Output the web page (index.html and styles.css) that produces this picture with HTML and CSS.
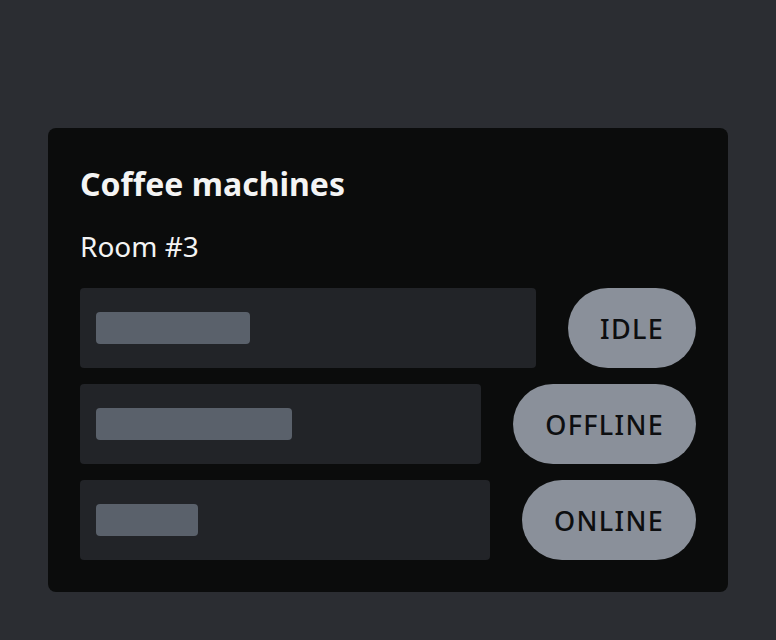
FILE: index.html
```html
<!DOCTYPE html>
<html>
<head>
<meta charset="utf-8">
<link rel="stylesheet" href="styles.css">
</head>
<body>
<div class="card">
  <h1 class="title">Coffee machines</h1>
  <h2 class="room">Room #3</h2>
  <div class="list">
    <div class="row">
      <div class="box"><div class="bar" style="width:154px"></div></div>
      <span class="badge">IDLE</span>
    </div>
    <div class="row">
      <div class="box"><div class="bar" style="width:196px"></div></div>
      <span class="badge">OFFLINE</span>
    </div>
    <div class="row">
      <div class="box"><div class="bar" style="width:102px"></div></div>
      <span class="badge">ONLINE</span>
    </div>
  </div>
</div>
</body>
</html>
```
FILE: styles.css
```css
html, body {
  margin: 0;
  padding: 0;
  background: #2b2d32;
  font-family: "Noto Sans", "Open Sans", sans-serif;
}
body {
  padding: 128px 48px 48px;
}
.card {
  background: #0b0c0c;
  border-radius: 8px;
  padding: 32px;
  color: #f4f4f4;
}
.title {
  margin: 0;
  font-size: 32px;
  font-weight: 700;
  line-height: 48px;
}
.room {
  margin: 18px 0 0;
  font-size: 28px;
  font-weight: 400;
  line-height: 40px;
}
.list {
  margin-top: 22px;
  display: flex;
  flex-direction: column;
  gap: 16px;
}
.row {
  display: flex;
  align-items: center;
  gap: 32px;
}
.box {
  flex: 1;
  height: 80px;
  background: #222428;
  border-radius: 4px;
  padding: 0 16px;
  display: flex;
  align-items: center;
}
.bar {
  height: 32px;
  background: #5a616b;
  border-radius: 4px;
}
.badge {
  height: 80px;
  padding: 0 32px;
  border-radius: 40px;
  background: #8a909a;
  color: #0d0e10;
  font-size: 27px;
  font-weight: 500;
  letter-spacing: 1.3px;
  display: flex;
  align-items: center;
}
```
